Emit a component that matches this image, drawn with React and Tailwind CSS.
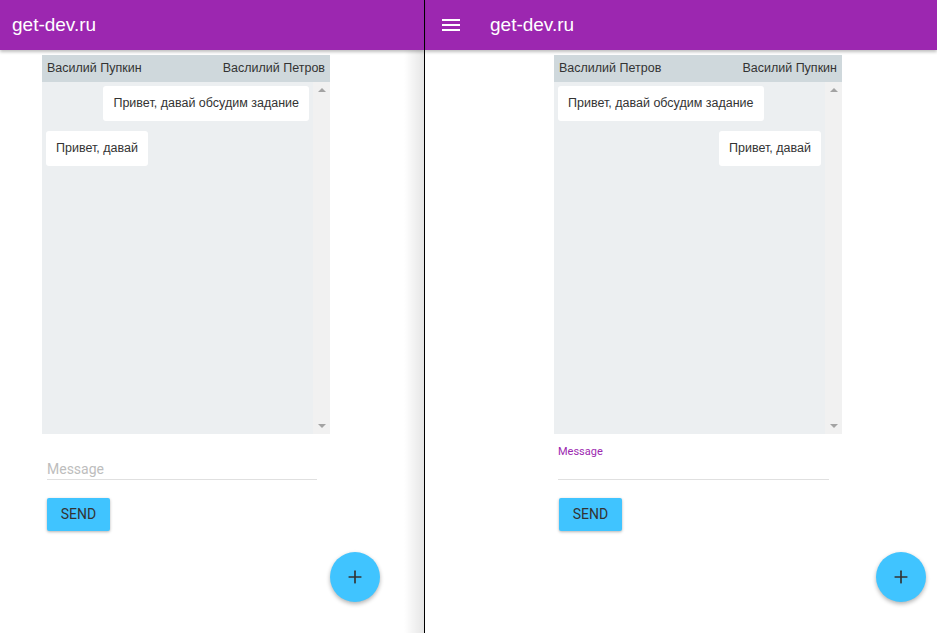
import { Plus } from "lucide-react";

const chatFont = { fontFamily: '"Liberation Sans", Arial, sans-serif' };

function Bubble({ text, side }) {
  return (
    <div className={`flex ${side === "right" ? "justify-end" : "justify-start"}`}>
      <div className="bg-white rounded-[3px] h-[35px] px-[10px] flex items-center text-[12.5px] text-[#333]">
        {text}
      </div>
    </div>
  );
}

function ChatBox({ left, right, messages }) {
  return (
    <div className="w-[288px]" style={chatFont}>
      <div className="h-[27px] bg-[#cfd8dc] flex items-center justify-between px-[5px] text-[12.5px] text-[#333]">
        <span>{left}</span>
        <span>{right}</span>
      </div>
      <div className="h-[352px] bg-[#eceff1] flex">
        <div className="flex-1 flex flex-col gap-[10px] pt-[4px] px-[4px]">
          {messages.map((m, i) => (
            <Bubble key={i} text={m.text} side={m.side} />
          ))}
        </div>
        <div className="w-[17px] bg-[#f1f1f1] flex flex-col items-center justify-between py-[6px]">
          <div className="w-0 h-0 border-x-[4px] border-x-transparent border-b-[4px] border-b-[#a3a3a3]" />
          <div className="w-0 h-0 border-x-[4px] border-x-transparent border-t-[4px] border-t-[#a3a3a3]" />
        </div>
      </div>
    </div>
  );
}

function AppBar({ menu, titleOffset }) {
  return (
    <div className="h-[50px] bg-[#9c27b0] shadow-[0_2px_3px_rgba(0,0,0,0.25)] flex items-center relative z-10">
      {menu && (
        <svg width="18" height="14" viewBox="0 0 18 14" className="ml-[17px]">
          <rect x="0" y="1" width="18" height="2" fill="white" />
          <rect x="0" y="6" width="18" height="2" fill="white" />
          <rect x="0" y="11" width="18" height="2" fill="white" />
        </svg>
      )}
      <span
        className={`text-white text-[19px] ${titleOffset}`}
        style={{ fontFamily: '"Liberation Sans", Arial, sans-serif' }}
      >
        get-dev.ru
      </span>
    </div>
  );
}

function Fab({ pos }) {
  return (
    <div
      className={`absolute ${pos} w-[50px] h-[50px] rounded-full bg-[#40c4ff] shadow-[0_2px_4px_rgba(0,0,0,0.3)] flex items-center justify-center`}
    >
      <Plus size={20} strokeWidth={2} color="#333" />
    </div>
  );
}

function SendButton() {
  return (
    <button className="w-[63px] h-[33px] bg-[#40c4ff] rounded-[2px] shadow-[0_1px_3px_rgba(0,0,0,0.3)] text-[14px] text-[#333]">
      SEND
    </button>
  );
}

export default function App() {
  return (
    <div
      className="w-[937px] h-[633px] flex overflow-hidden bg-white"
      style={{ fontFamily: "Roboto, sans-serif" }}
    >
      {/* drawer pane */}
      <div className="w-[425px] h-full relative border-r border-black shrink-0 z-20">
        <AppBar titleOffset="ml-[12px]" />
        <div className="pl-[42px] pt-[5px]">
          <ChatBox
            left="Василий Пупкин"
            right="Васлилий Петров"
            messages={[
              { text: "Привет, давай обсудим задание", side: "right" },
              { text: "Привет, давай", side: "left" },
            ]}
          />
          <div className="ml-[5px] w-[270px] mt-[26px] border-b border-[#e0e0e0] h-[20px] text-[14px] leading-[18px] text-[#bdbdbd]">
            Message
          </div>
          <div className="ml-[5px] mt-[18px]">
            <SendButton />
          </div>
        </div>
        <Fab pos="right-[44px] bottom-[31px]" />
        <div className="absolute right-0 top-0 bottom-0 w-[20px] bg-gradient-to-r from-black/0 to-black/10 pointer-events-none" />
      </div>

      {/* main pane */}
      <div className="w-[512px] h-full relative">
        <AppBar menu titleOffset="ml-[30px]" />
        <div className="pl-[129px] pt-[5px]">
          <ChatBox
            left="Васлилий Петров"
            right="Василий Пупкин"
            messages={[
              { text: "Привет, давай обсудим задание", side: "left" },
              { text: "Привет, давай", side: "right" },
            ]}
          />
          <div className="ml-[4px] w-[271px] mt-[11px] border-b border-[#e0e0e0] h-[35px]">
            <div className="text-[11px] leading-[14px] text-[#9c27b0]">Message</div>
          </div>
          <div className="ml-[5px] mt-[18px]">
            <SendButton />
          </div>
        </div>
        <Fab pos="right-[11px] bottom-[31px]" />
      </div>
    </div>
  );
}
